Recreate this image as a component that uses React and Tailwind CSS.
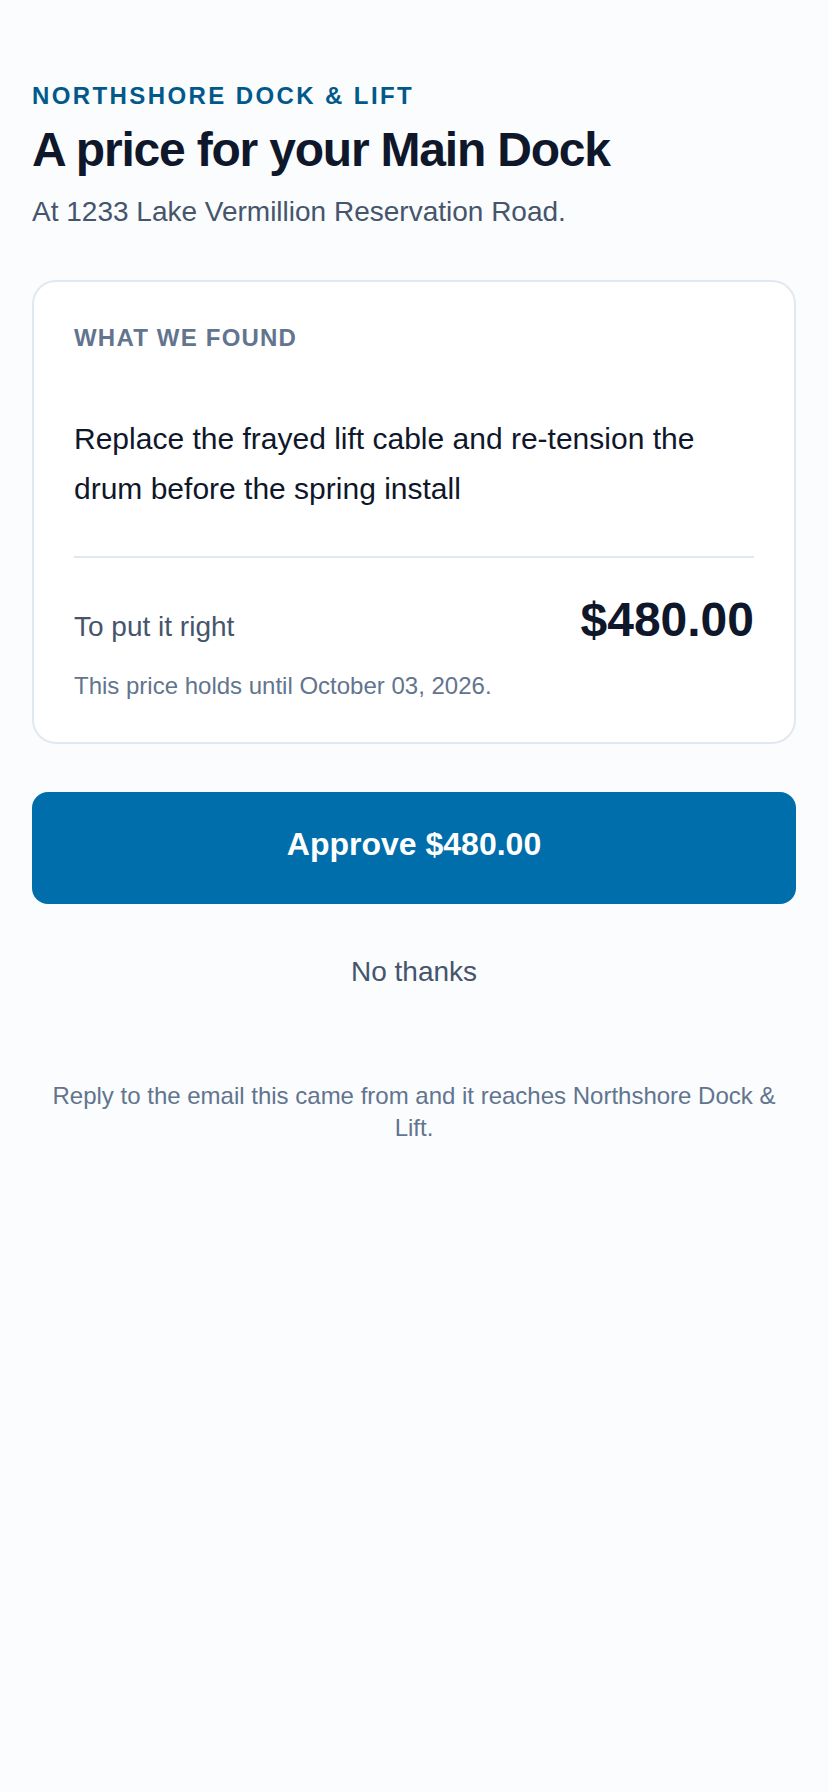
const quote = {
  company: "Northshore Dock & Lift",
  asset: "Main Dock",
  address: "1233 Lake Vermillion Reservation Road",
  finding: "Replace the frayed lift cable and re-tension the drum before the spring install",
  price: "$480.00",
  validUntil: "October 03, 2026",
};

export default function App() {
  return (
    <div className="min-h-screen bg-[#fafcfe] px-8 py-20 font-['Liberation_Sans',Arial,sans-serif] text-slate-900">
      <main>
        <header>
          <p className="text-2xl leading-8 font-bold uppercase tracking-widest text-sky-800">
            {quote.company}
          </p>
          <h1 className="mt-2 text-5xl leading-[60px] font-bold tracking-tight">
            {`A price for your ${quote.asset}`}
          </h1>
          <p className="mt-3 text-[28px] leading-10 text-slate-600">{`At ${quote.address}.`}</p>
        </header>

        <section className="mt-12 rounded-3xl border-2 border-slate-200 bg-white p-10">
          <h2 className="text-2xl leading-8 font-bold uppercase tracking-wider text-slate-500">
            What we found
          </h2>
          <p className="mt-[60px] text-[30px] leading-[50px]">{quote.finding}</p>

          <div className="mt-[42px] border-t-2 border-slate-200 pt-8">
            <div className="flex items-baseline justify-between">
              <span className="text-[28px] leading-10 text-slate-600">To put it right</span>
              <span className="text-5xl leading-[60px] font-bold">{quote.price}</span>
            </div>
            <p className="mt-5 text-2xl leading-8 text-slate-500">
              {`This price holds until ${quote.validUntil}.`}
            </p>
          </div>
        </section>

        <button
          type="button"
          className="mt-12 block w-full rounded-2xl bg-[#006eaa] pt-8 pb-10 text-[32px] leading-10 font-bold text-white"
        >
          {`Approve ${quote.price}`}
        </button>
        <button type="button" className="mt-4 block w-full py-8 text-[28px] leading-10 text-slate-600">
          No thanks
        </button>
      </main>

      <footer className="mt-14 text-center text-2xl leading-8 text-slate-500">
        {`Reply to the email this came from and it reaches ${quote.company}.`}
      </footer>
    </div>
  );
}
